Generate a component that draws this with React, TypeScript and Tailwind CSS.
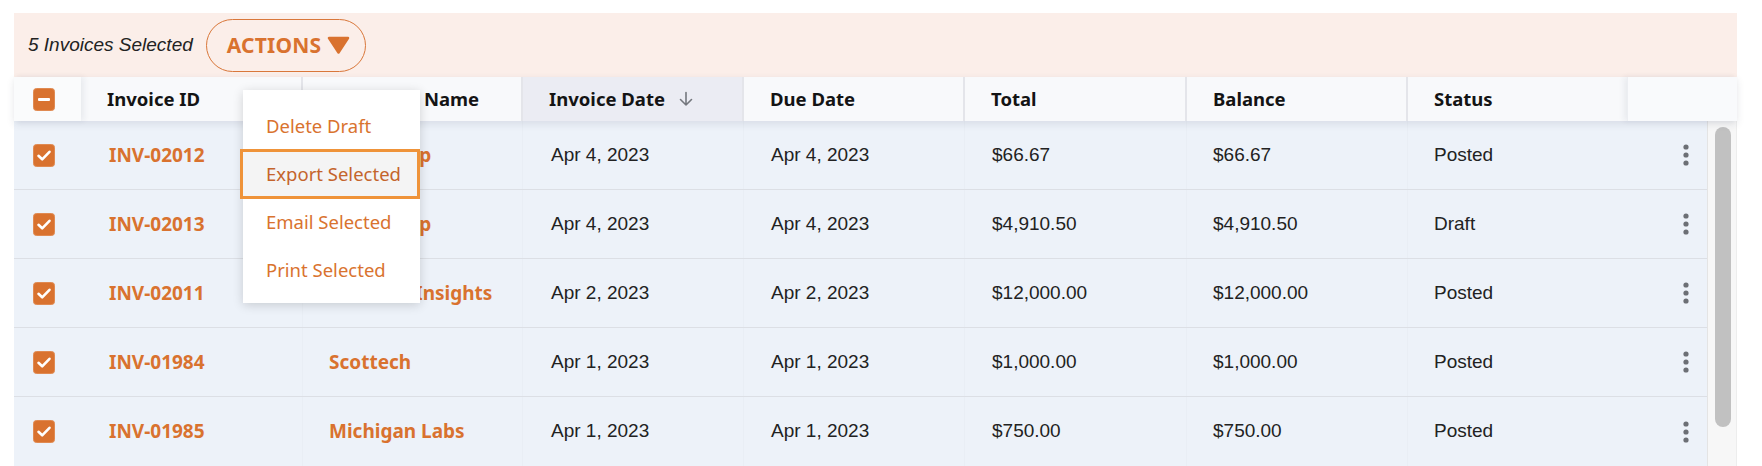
import React from "react";

type Row = {
  id: string;
  customer: string;
  invDate: string;
  dueDate: string;
  total: string;
  balance: string;
  status: string;
};

const rows: Row[] = [
  { id: "INV-02012", customer: "Acme Corp", invDate: "Apr 4, 2023", dueDate: "Apr 4, 2023", total: "$66.67", balance: "$66.67", status: "Posted" },
  { id: "INV-02013", customer: "Acme Corp", invDate: "Apr 4, 2023", dueDate: "Apr 4, 2023", total: "$4,910.50", balance: "$4,910.50", status: "Draft" },
  { id: "INV-02011", customer: "Quantex Insights", invDate: "Apr 2, 2023", dueDate: "Apr 2, 2023", total: "$12,000.00", balance: "$12,000.00", status: "Posted" },
  { id: "INV-01984", customer: "Scottech", invDate: "Apr 1, 2023", dueDate: "Apr 1, 2023", total: "$1,000.00", balance: "$1,000.00", status: "Posted" },
  { id: "INV-01985", customer: "Michigan Labs", invDate: "Apr 1, 2023", dueDate: "Apr 1, 2023", total: "$750.00", balance: "$750.00", status: "Posted" },
];

function CheckBox({ minus }: { minus?: boolean }) {
  return (
    <svg width="22" height="23" viewBox="0 0 22 23" className="block">
      <rect x="0.5" y="0.5" width="21" height="22" rx="3" fill="#d9722f" stroke="#e08a52" strokeWidth="1" />
      {minus ? (
        <rect x="5" y="10" width="12" height="3" rx="1" fill="#ffffff" />
      ) : (
        <path d="M5.5 11.8 L9.2 15.3 L16.5 7.8" fill="none" stroke="#ffffff" strokeWidth="2.6" strokeLinecap="round" strokeLinejoin="round" />
      )}
    </svg>
  );
}

function Kebab() {
  return (
    <svg width="6" height="22" viewBox="0 0 6 22" className="block">
      <circle cx="3" cy="3" r="2.6" fill="#6c6f75" />
      <circle cx="3" cy="11" r="2.6" fill="#6c6f75" />
      <circle cx="3" cy="19" r="2.6" fill="#6c6f75" />
    </svg>
  );
}

function SortDown() {
  return (
    <svg width="16" height="16" viewBox="0 0 16 16" className="block">
      <path d="M8 1.5 V14 M2.5 8.5 L8 14 L13.5 8.5" fill="none" stroke="#74777d" strokeWidth="1.6" strokeLinecap="round" strokeLinejoin="round" />
    </svg>
  );
}

const headFont = { fontFamily: '"Noto Sans", "Open Sans", sans-serif' };
const bodyFont = { fontFamily: '"Liberation Sans", Arial, sans-serif' };

export default function App() {
  return (
    <div className="relative w-[1762px] h-[466px] overflow-hidden bg-white pt-[13px] pl-[14px]">
      <div className="w-[1723px]">
        {/* Selection banner */}
        <div className="h-[64px] bg-[#fbeee9] flex items-center pl-[14px] gap-[13px]">
          <span className="italic text-[19px] text-[#222222]" style={bodyFont}>
            5 Invoices Selected
          </span>
          <div className="h-[53px] w-[160px] rounded-full border border-[#d9773a] flex items-center pl-[20px] gap-[6px]">
            <span className="text-[21px] font-bold text-[#d9722f] leading-none tracking-[0.2px]" style={headFont}>
              ACTIONS
            </span>
            <svg width="23" height="18" viewBox="0 0 23 18" className="block">
              <polygon points="2,2 21,2 11.5,16.5" fill="#d9722f" stroke="#d9722f" strokeWidth="2.5" strokeLinejoin="round" />
            </svg>
          </div>
        </div>

        {/* Header */}
        <div className="relative z-10 h-[44px] flex bg-[#f8f9fb] shadow-[0_3px_8px_rgba(30,40,70,0.10)] text-[18.5px] font-bold text-[#141414]" style={headFont}>
          <div className="w-[67px] shrink-0 flex items-center pl-[19px] bg-[#fafbfc] shadow-[3px_0_6px_rgba(30,40,70,0.07)] relative z-10">
            <CheckBox minus />
          </div>
          <div className="w-[222px] shrink-0 flex items-center pl-[26px] border-r-2 border-[#e4e5ea]">Invoice ID</div>
          <div className="w-[220px] shrink-0 flex items-center pl-[26px] border-r-2 border-[#e4e5ea]">Customer Name</div>
          <div className="w-[221px] shrink-0 flex items-center pl-[26px] gap-[13px] bg-[#ebecf3] border-r-2 border-[#e4e5ea]">
            <span>Invoice Date</span>
            <SortDown />
          </div>
          <div className="w-[221px] shrink-0 flex items-center pl-[26px] border-r-2 border-[#e4e5ea]">Due Date</div>
          <div className="w-[222px] shrink-0 flex items-center pl-[26px] border-r-2 border-[#e4e5ea]">Total</div>
          <div className="w-[221px] shrink-0 flex items-center pl-[26px] border-r-2 border-[#e4e5ea]">Balance</div>
          <div className="w-[219px] shrink-0 flex items-center pl-[26px]">Status</div>
          <div className="w-[110px] shrink-0 bg-[#f9fafc] shadow-[-3px_0_6px_rgba(30,40,70,0.07)] border-l border-[#eceef2]" />
        </div>

        {/* Body */}
        <div className="flex h-[345px]">
          <div className="w-[1693px] shrink-0 bg-[#edf2f9]">
            {rows.map((r, i) => (
              <div
                key={r.id}
                className={`h-[69px] flex text-[19px] text-[#222222] ${i < rows.length - 1 ? "border-b border-[#dcdfe5]" : ""}`}
                style={bodyFont}
              >
                <div className="w-[67px] shrink-0 flex items-center pl-[19px]">
                  <CheckBox />
                </div>
                <div className="w-[222px] shrink-0 flex items-center pl-[28px] border-r border-[#e9eef5] text-[#d9722f] font-bold" style={headFont}>
                  {r.id}
                </div>
                <div className="w-[220px] shrink-0 flex items-center pl-[26px] border-r border-[#e9eef5] text-[#d9722f] font-bold whitespace-nowrap" style={headFont}>
                  {r.customer}
                </div>
                <div className="w-[221px] shrink-0 flex items-center pl-[28px] border-r border-[#e9eef5]">{r.invDate}</div>
                <div className="w-[221px] shrink-0 flex items-center pl-[27px] border-r border-[#e9eef5]">{r.dueDate}</div>
                <div className="w-[222px] shrink-0 flex items-center pl-[27px] border-r border-[#e9eef5]">{r.total}</div>
                <div className="w-[221px] shrink-0 flex items-center pl-[26px] border-r border-[#e9eef5]">{r.balance}</div>
                <div className="w-[219px] shrink-0 flex items-center pl-[26px]">{r.status}</div>
                <div className="w-[80px] shrink-0 flex items-center justify-end pr-[18px]">
                  <Kebab />
                </div>
              </div>
            ))}
          </div>
          {/* Scrollbar */}
          <div className="w-[30px] shrink-0 bg-[#f7f7f7] border-l border-[#e4e4e4] border-r border-r-[#ededed] pl-[7px] pt-[6px]">
            <div className="w-[16px] h-[300px] rounded-full bg-[#c1c1c1]" />
          </div>
        </div>
      </div>

      {/* Actions dropdown menu */}
      <div className="absolute left-[243px] top-[90px] w-[177px] bg-white shadow-[0_2px_10px_rgba(0,0,0,0.16)] pt-[12px] pb-[9px] z-20 text-[18.5px] text-[#d9732f]" style={headFont}>
        <div className="h-[48px] flex items-center pl-[23px]">Delete Draft</div>
        <div className="h-[50px] -my-px -ml-[3px] flex items-center pl-[23px] bg-[#f4f4f4] border-[3px] border-[#ef9339] text-[#c4642c]">
          Export Selected
        </div>
        <div className="h-[48px] flex items-center pl-[23px]">Email Selected</div>
        <div className="h-[48px] flex items-center pl-[23px]">Print Selected</div>
      </div>
    </div>
  );
}
